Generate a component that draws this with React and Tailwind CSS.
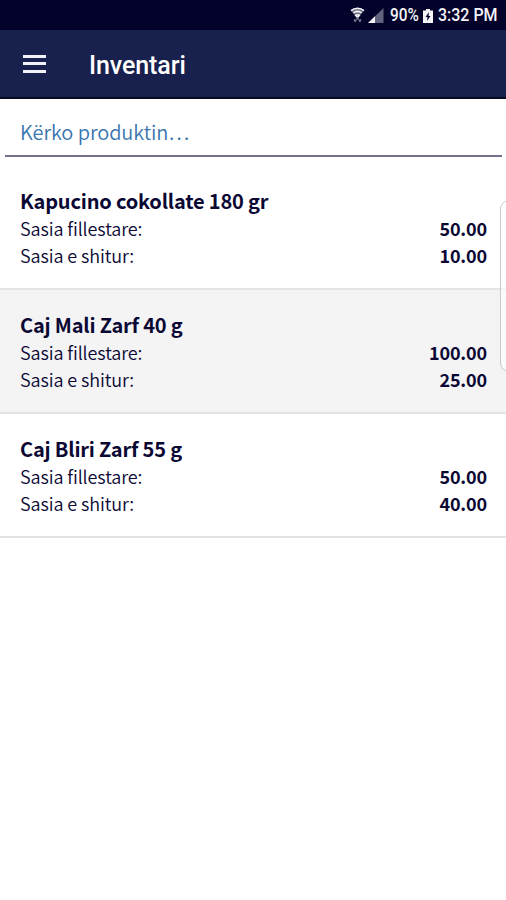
const products = [
  { name: 'Kapucino cokollate 180 gr', initial: '50.00', sold: '10.00' },
  { name: 'Caj Mali Zarf 40 g', initial: '100.00', sold: '25.00' },
  { name: 'Caj Bliri Zarf 55 g', initial: '50.00', sold: '40.00' },
];

function WifiIcon() {
  return (
    <svg width="15" height="17" viewBox="0 0 15 17" fill="none">
      <path d="M0.8 3.4C4.4 0 10.6 0 14.2 3.4L7.5 11Z" fill="#77778a" />
      <path d="M1 3.6C4.6 0.4 10.4 0.4 14 3.6M3.4 6c2.4-1.9 5.8-1.9 8.2 0M5.6 8.4c1.2-.9 2.6-.9 3.8 0L7.5 10.4Z" stroke="#f4f4f8" strokeWidth="1.5" />
      <path d="M4.5 14.8 7.5 11l3 3.8M4 12.4l1.5 2.6M11 12.4l-1.5 2.6" stroke="#77778a" strokeWidth="1.3" />
    </svg>
  );
}

function SignalIcon() {
  return (
    <svg width="16" height="15" viewBox="0 0 16 15">
      <path d="M0 15 15.5 0V15Z" fill="#62627f" />
      <path d="M0 15 7 8.2V15Z" fill="#f4f4f8" />
    </svg>
  );
}

function BatteryIcon() {
  return (
    <svg width="10" height="14" viewBox="0 0 10 14">
      <path d="M3 0h4v1.5h3V14H0V1.5h3Z" fill="#f4f4f8" />
      <path d="M6 3 2.5 8h2L4 12l3.5-5h-2Z" fill="#02022a" />
    </svg>
  );
}

function StatusBar() {
  return (
    <div className="flex h-[30px] shrink-0 items-center justify-end bg-[#02022a] pr-[9px] pt-px font-['Roboto',sans-serif] text-[19px] font-medium text-[#f4f4f8]">
      <div className="mb-px flex"><WifiIcon /></div>
      <div className="ml-[3px] flex"><SignalIcon /></div>
      <span className="ml-[6px] w-[29px] origin-left scale-x-[0.81]">90%</span>
      <div className="ml-[4px] flex"><BatteryIcon /></div>
      <span className="ml-[5px] w-[59px] origin-left scale-x-[0.84]">3:32 PM</span>
    </div>
  );
}

function Header() {
  return (
    <header className="flex h-[69px] shrink-0 items-center border-b-2 border-[#060a20] bg-[#18204d] pl-[23px] font-['Roboto',sans-serif]">
      <button aria-label="Menu" className="flex h-[18px] w-[23px] flex-col justify-between">
        <span className="h-[3px] w-full bg-[#f1f1f8]"></span>
        <span className="h-[3px] w-full bg-[#f1f1f8]"></span>
        <span className="h-[3px] w-full bg-[#f1f1f8]"></span>
      </button>
      <h1 className="ml-[43px] pt-[5px] text-[25px] font-medium tracking-[-0.1px] text-white">Inventari</h1>
    </header>
  );
}

function Row({ label, value }) {
  return (
    <div className="flex h-[27px] items-center justify-between">
      <span className="text-[18px] font-[350] tracking-[-0.1px]">{label}</span>
      <span className="text-[18px] font-bold tracking-[-0.15px]">{value}</span>
    </div>
  );
}

function ProductCard({ product }) {
  return (
    <li className="h-[124px] border-b-2 border-[#e4e4e6] pt-[20px] pr-[19px] pl-5 even:bg-[#f4f4f4]">
      <h2 className="flex h-[28px] items-center text-[20px] font-bold tracking-[-0.19px]">{product.name}</h2>
      <Row label="Sasia fillestare:" value={product.initial} />
      <Row label="Sasia e shitur:" value={product.sold} />
    </li>
  );
}

export default function App() {
  return (
    <div className="relative flex h-[900px] w-[506px] flex-col overflow-hidden bg-white font-['Noto_Sans_CJK_SC',sans-serif] whitespace-nowrap text-[#0b0834]">
      <StatusBar />
      <Header />
      <div className="ml-[5px] mr-1 flex h-[58px] shrink-0 items-center border-b-2 border-[#77718e] pt-[10px] pl-[15px]">
        <input
          aria-label="Kërko produktin"
          placeholder="Kërko produktin…"
          className="w-full text-[20px] font-[350] tracking-[-0.08px] outline-none placeholder:text-[#3a76b0]"
        />
      </div>
      <ul className="mt-[9px] [&>li]:pt-[21px]">
        {products.map((product) => (
          <ProductCard key={product.name} product={product} />
        ))}
      </ul>
      {/* edge panel handle */}
      <div className="absolute top-[200px] -right-[12px] h-[172px] w-[18px] rounded-[10px] border border-[#c9c9cb] bg-white/60"></div>
    </div>
  );
}
